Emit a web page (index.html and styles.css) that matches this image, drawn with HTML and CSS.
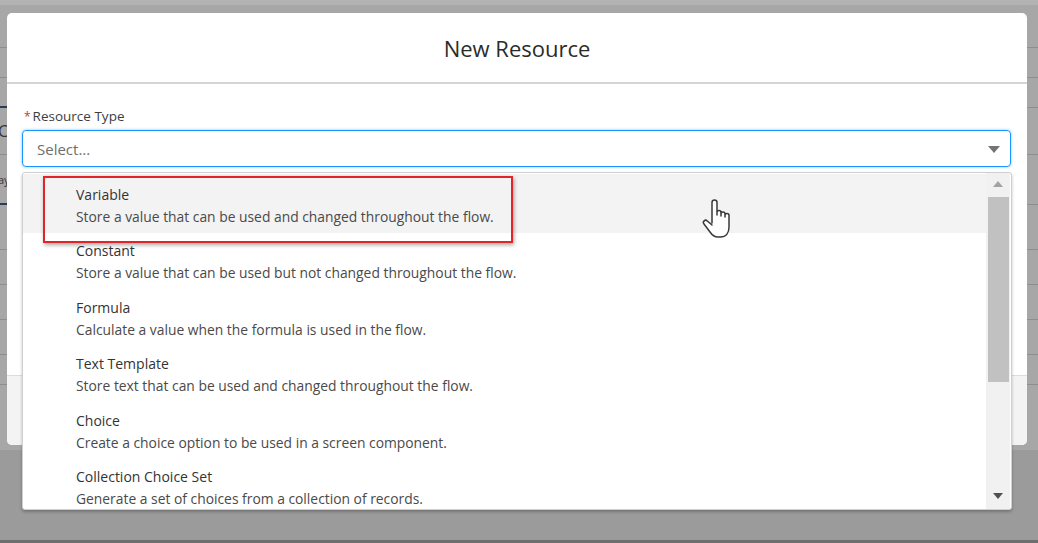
FILE: index.html
```html
<!DOCTYPE html>
<html lang="en">
<head>
<meta charset="utf-8">
<title>New Resource</title>
<link rel="stylesheet" href="styles.css">
</head>
<body>
<div class="page">
  <div class="bg-top"></div>
  <div class="bg-rows">
    <div class="bg-row r1"></div>
    <div class="bg-row r2"></div>
    <div class="bg-row r3"><span class="bg-mark"></span></div>
    <div class="bg-row r4"><span class="bg-text">C</span></div>
    <div class="bg-row r5"><span class="bg-text small">ay</span><span class="bg-mark"></span></div>
    <div class="bg-row r6"></div>
    <div class="bg-row r7"></div>
    <div class="bg-row r8"></div>
    <div class="bg-row r9"></div>
    <div class="bg-row r10"></div>
    <div class="bg-row r11"></div>
  </div>
  <div class="bg-bottom"></div>
</div>

<section class="modal">
  <header class="modal-header">
    <h2 class="modal-title">New Resource</h2>
  </header>
  <div class="modal-body">
    <label class="field-label"><abbr class="required">*</abbr>Resource Type</label>
    <div class="combobox">
      <div class="combo-input">
        <span class="placeholder">Select...</span>
        <svg class="combo-arrow" width="12" height="7" viewBox="0 0 12 7"><path d="M0 0 H12 L6 7 Z" fill="#747474"/></svg>
      </div>
      <div class="listbox">
        <ul class="options">
          <li class="option hover">
            <span class="opt-title">Variable</span>
            <span class="opt-desc">Store a value that can be used and changed throughout the flow.</span>
          </li>
          <li class="option">
            <span class="opt-title">Constant</span>
            <span class="opt-desc">Store a value that can be used but not changed throughout the flow.</span>
          </li>
          <li class="option">
            <span class="opt-title">Formula</span>
            <span class="opt-desc">Calculate a value when the formula is used in the flow.</span>
          </li>
          <li class="option">
            <span class="opt-title">Text Template</span>
            <span class="opt-desc">Store text that can be used and changed throughout the flow.</span>
          </li>
          <li class="option">
            <span class="opt-title">Choice</span>
            <span class="opt-desc">Create a choice option to be used in a screen component.</span>
          </li>
          <li class="option">
            <span class="opt-title">Collection Choice Set</span>
            <span class="opt-desc">Generate a set of choices from a collection of records.</span>
          </li>
        </ul>
        <div class="scrollbar">
          <svg class="sb-arrow" width="10" height="6" viewBox="0 0 10 6"><path d="M0 6 H10 L5 0 Z" fill="#a3a3a3"/></svg>
          <div class="sb-track"><div class="sb-thumb"></div></div>
          <svg class="sb-arrow" width="10" height="6" viewBox="0 0 10 6"><path d="M0 0 H10 L5 6 Z" fill="#505050"/></svg>
        </div>
      </div>
    </div>
  </div>
  <footer class="modal-footer"></footer>
</section>

<div class="annotation"></div>

<svg class="cursor" width="34" height="42" viewBox="0 0 34 42">
  <path d="M11 25 L11 4.5 A2.5 2.5 0 0 1 16 4.5 L16 17 L16 14.5 A2 2 0 0 1 20 14.5 L20 18 L20 16 A2 2 0 0 1 24 16 L24 19 L24 17.5 A2 2 0 0 1 28 17.5 L28 29 C28 35 25 39 19.5 39 L17 39 C13 39 11 37 9 34 L3 26 A2 2 0 0 1 6.3 23 L11 27"
        fill="#ffffff" stroke="#3a3a3a" stroke-width="1.5" stroke-linejoin="round" stroke-linecap="round"/>
</svg>
</body>
</html>
```

FILE: styles.css
```css
* { box-sizing: border-box; }

html, body {
  margin: 0;
  padding: 0;
}

body {
  width: 1038px;
  height: 543px;
  overflow: hidden;
  position: relative;
  background: #9d9d9d;
  font-family: "Open Sans", "Noto Sans", Arial, sans-serif;
  color: #3e3e3c;
}

/* ---------- dimmed page behind the modal ---------- */
.page {
  height: 543px;
  display: flex;
  flex-direction: column;
}

.bg-top {
  height: 5px;
  background: #b3b3b3;
}

.bg-rows {
  flex: 0 0 445px;
  display: flex;
  flex-direction: column;
  background: #a7a7a7;
}

.bg-row {
  border-bottom: 1px solid #8e8e8e;
  position: relative;
  display: flex;
  align-items: center;
}

.r1 { height: 43px; }
.r2 { height: 30px; }
.r3 { height: 30px; }
.r4 { height: 47px; }
.r5 { height: 50px; }
.r6 { height: 45px; }
.r7 { height: 35px; }
.r8 { height: 35px; }
.r9 { height: 35px; }
.r10 { height: 30px; }
.r11 { flex: 1; border-bottom: 0; }

.bg-mark {
  position: absolute;
  left: 0;
  bottom: -1px;
  width: 7px;
  height: 2px;
  background: #2b3a55;
}

.bg-text {
  font-size: 16px;
  color: #333;
  margin-left: -2px;
}
.bg-text.small { font-size: 11px; }

.bg-bottom {
  flex: 1;
  background: #9b9b9b;
  border-bottom: 3px solid #6e6e6e;
}

/* ---------- modal ---------- */
.modal {
  position: absolute;
  left: 7px;
  top: 13px;
  width: 1020px;
  height: 432px;
  background: #ffffff;
  border-radius: 5px;
  display: flex;
  flex-direction: column;
  overflow: visible;
}

.modal-header {
  height: 71px;
  border-bottom: 2px solid #d5d5d5;
  display: flex;
  align-items: center;
  justify-content: center;
  padding-top: 1px;
}

.modal-title {
  margin: 0;
  font-size: 22px;
  font-weight: 400;
  color: #2b2b2b;
}

.modal-body {
  flex: 1;
  padding: 23px 16px 0 15px;
  position: relative;
}

.field-label {
  display: block;
  font-size: 13.5px;
  line-height: 18px;
  color: #3e3e3c;
  margin-left: 2px;
  margin-bottom: 4px;
}

.required {
  color: #c23934;
  text-decoration: none;
  margin-right: 2px;
  font-size: 12px;
}

.combobox {
  position: relative;
}

.combo-input {
  height: 37px;
  border: 1px solid #1b96ff;
  border-radius: 4px;
  box-shadow: 0 0 3px #7fc1f5;
  display: flex;
  align-items: center;
  justify-content: space-between;
  padding: 0 10px 0 14px;
}

.placeholder {
  font-size: 15px;
  color: #706e6b;
}

.combo-arrow {
  margin-top: 2px;
}

.modal-footer {
  height: 70px;
  background: #f3f3f3;
  border-top: 1px solid #dcdcdc;
  border-radius: 0 0 5px 5px;
}

/* ---------- dropdown ---------- */
.listbox {
  position: absolute;
  top: 42px;
  left: 0;
  width: 990px;
  height: 338px;
  background: #ffffff;
  border: 1px solid #cfcfcf;
  border-radius: 3px;
  box-shadow: 0 2px 3px rgba(0, 0, 0, 0.25);
  display: flex;
  z-index: 2;
  overflow: hidden;
}

.options {
  flex: 1;
  list-style: none;
  margin: 0;
  padding: 1px 0 0 0;
}

.option {
  height: 56.4px;
  padding: 11px 0 0 53px;
  display: flex;
  flex-direction: column;
}

.option.hover {
  background: #f3f3f3;
  height: 59px;
  margin-bottom: -2.6px;
}

.opt-title {
  font-size: 14px;
  line-height: 19px;
  color: #333333;
}

.opt-desc {
  font-size: 13.85px;
  line-height: 19px;
  margin-top: 3px;
  color: #4a4a4a;
}

.scrollbar {
  width: 24px;
  background: #f1f1f1;
  display: flex;
  flex-direction: column;
  align-items: center;
  padding: 8px 0 10px;
  margin-right: 1px;
}

.sb-arrow { flex: none; }

.sb-track {
  flex: 1;
  width: 100%;
  padding: 10px 1px 0 2px;
}

.sb-thumb {
  height: 185px;
  background: #c1c1c1;
}

/* ---------- annotation + cursor (overlays) ---------- */
.annotation {
  position: absolute;
  left: 43px;
  top: 176px;
  width: 470px;
  height: 67px;
  border: 2px solid #e0242a;
  box-shadow: 1px 2px 4px rgba(0, 0, 0, 0.35);
  z-index: 3;
}

.cursor {
  position: absolute;
  left: 701px;
  top: 198px;
  z-index: 4;
}
```
